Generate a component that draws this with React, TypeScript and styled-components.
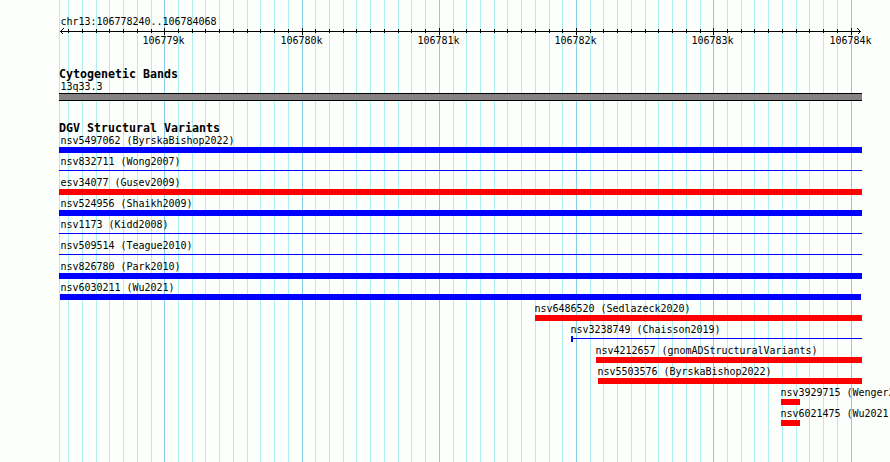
import React from "react"
import styled, { createGlobalStyle } from "styled-components"

const GlobalStyle = createGlobalStyle`
    body {
        margin: 0;
        background: #fdfffc;
    }
`
const Browser = styled.main`
    position: relative;
    width: 890px;
    height: 462px;
    overflow: hidden;
    background: #fdfffc;
    color: #000;
    font-family: "DejaVu Sans Mono", "Liberation Mono", monospace;
    font-size: 10px;
`
const Grid = styled.svg`
    position: absolute;
    top: 0;
    left: 0;
`
const Content = styled.div`
    position: relative;
    padding-top: 16px;
`
const Label = styled.p<{ $start: number }>`
    margin: 0 0 0 ${({ $start }) => $start + 0.5}px;
    height: 12px;
    line-height: 12px;
    letter-spacing: -0.0205px;
    white-space: pre;
`
const Ruler = styled.svg`
    display: block;
    width: 890px;
    height: 19px;
`
const Track = styled.section<{ $gap: number }>`
    padding-top: ${({ $gap }) => $gap}px;
`
const Title = styled.h2`
    margin: 0 0 0 59px;
    height: 13px;
    line-height: 13px;
    font-size: 11.63px;
    font-weight: bold;
    white-space: pre;
`
const Band = styled.div`
    box-sizing: border-box;
    width: 803px;
    height: 8px;
    margin-left: 59px;
    border: solid #000;
    border-width: 1px 0;
    background: #868284;
`
const Row = styled.div`
    height: 21px;
`
const Bar = styled.div<{ $start: number, $end: number, $color: string, $thin?: boolean }>`
    width: ${({ $start, $end }) => $end - $start}px;
    height: ${({ $thin }) => $thin ? 1 : 6}px;
    margin-left: ${({ $start }) => $start}px;
    margin-top: ${({ $thin }) => $thin ? 2 : 0}px;
    background: ${({ $color }) => $color};
`
const CappedBar = styled.div<{ $start: number, $end: number, $color: string }>`
    display: flex;
    align-items: center;
    box-sizing: border-box;
    width: ${({ $start, $end }) => $end - $start}px;
    height: 6px;
    margin-left: ${({ $start }) => $start}px;
    border-left: 2px solid ${({ $color }) => $color};

    &::after {
        content: "";
        width: 100%;
        height: 1px;
        margin-bottom: 1px;
        background: ${({ $color }) => $color};
    }
`

interface Variant {
    name: string,
    start: number,
    end: number,
    color: string,
    shape?: "thin" | "capped",
}

const BLUE = "#0000ff"
const RED = "#ff0000"

const variants: Variant[] = [
    { name: "nsv5497062 (ByrskaBishop2022)", start: 59, end: 862, color: BLUE },
    { name: "nsv832711 (Wong2007)", start: 59, end: 862, color: BLUE, shape: "thin" },
    { name: "esv34077 (Gusev2009)", start: 59, end: 862, color: RED },
    { name: "nsv524956 (Shaikh2009)", start: 59, end: 862, color: BLUE },
    { name: "nsv1173 (Kidd2008)", start: 59, end: 862, color: BLUE, shape: "thin" },
    { name: "nsv509514 (Teague2010)", start: 59, end: 862, color: BLUE, shape: "thin" },
    { name: "nsv826780 (Park2010)", start: 59, end: 862, color: BLUE },
    { name: "nsv6030211 (Wu2021)", start: 60, end: 861, color: BLUE },
    { name: "nsv6486520 (Sedlazeck2020)", start: 535, end: 862, color: RED },
    { name: "nsv3238749 (Chaisson2019)", start: 571, end: 862, color: BLUE, shape: "capped" },
    { name: "nsv4212657 (gnomADStructuralVariants)", start: 596, end: 862, color: RED },
    { name: "nsv5503576 (ByrskaBishop2022)", start: 598, end: 862, color: RED },
    { name: "nsv3929715 (Wenger2022)", start: 781, end: 800, color: RED },
    { name: "nsv6021475 (Wu2021)", start: 781, end: 800, color: RED },
]

const minorTicks = [
    68, 82, 96, 109, 123, 137, 151, 178, 192, 205, 219, 233, 247, 260, 274, 288,
    315, 329, 343, 356, 370, 384, 398, 411, 425, 453, 466, 480, 494, 507, 521, 535,
    549, 562, 590, 603, 617, 631, 645, 658, 672, 686, 700, 727, 741, 754, 768, 782,
    796, 809, 823, 837,
]

const majorTicks = [
    { x: 164, label: "106779k" },
    { x: 302, label: "106780k" },
    { x: 439, label: "106781k" },
    { x: 576, label: "106782k" },
    { x: 713, label: "106783k" },
    { x: 851, label: "106784k" },
]

const GridLines = () => (
    <Grid width="890" height="462" shapeRendering="crispEdges" aria-hidden="true">
        {[59, ...minorTicks].map(x => <rect key={x} x={x} width="1" height="462" fill="#afeeee" />)}
        {majorTicks.map(({ x }) => <rect key={x} x={x} width="1" height="462" fill="#87ceeb" />)}
    </Grid>
)

const Scale = () => (
    <Ruler viewBox="0 1 890 19">
        <g shapeRendering="crispEdges">
            <rect x="60" y="4" width="801" height="1" />
            {minorTicks.map(x => <rect key={x} x={x} y="2" width="1" height="4" />)}
            {majorTicks.map(({ x }) => <rect key={x} x={x} y="1" width="1" height="7" />)}
            <path d="M63.5 1.5 60.5 4.5 63.5 7.5M857.5 1.5 860.5 4.5 857.5 7.5" fill="none" stroke="#000" />
        </g>
        {majorTicks.map(({ x, label }) => (
            <text key={x} x={x - 21.5} y="17" fontSize="10" letterSpacing="-0.0205">{label}</text>
        ))}
    </Ruler>
)

const VariantRow = ({ name, start, end, color, shape }: Variant) => (
    <Row>
        <Label $start={Math.max(60, start - 1)}>{name}</Label>
        {shape === "capped"
            ? <CappedBar $start={start} $end={end} $color={color} />
            : <Bar $start={start} $end={end} $color={color} $thin={shape === "thin"} />}
    </Row>
)

export const App: React.FC = () => {
    return (
        <Browser>
            <GlobalStyle />
            <GridLines />
            <Content>
                <Label $start={60}>chr13:106778240..106784068</Label>
                <Scale />
                <Track $gap={21}>
                    <Title>Cytogenetic Bands</Title>
                    <Label $start={60}>13q33.3</Label>
                    <Band />
                </Track>
                <Track $gap={21}>
                    <Title>DGV Structural Variants</Title>
                    {variants.map(variant => <VariantRow key={variant.name} {...variant} />)}
                </Track>
            </Content>
        </Browser>
    )
};

export default App
